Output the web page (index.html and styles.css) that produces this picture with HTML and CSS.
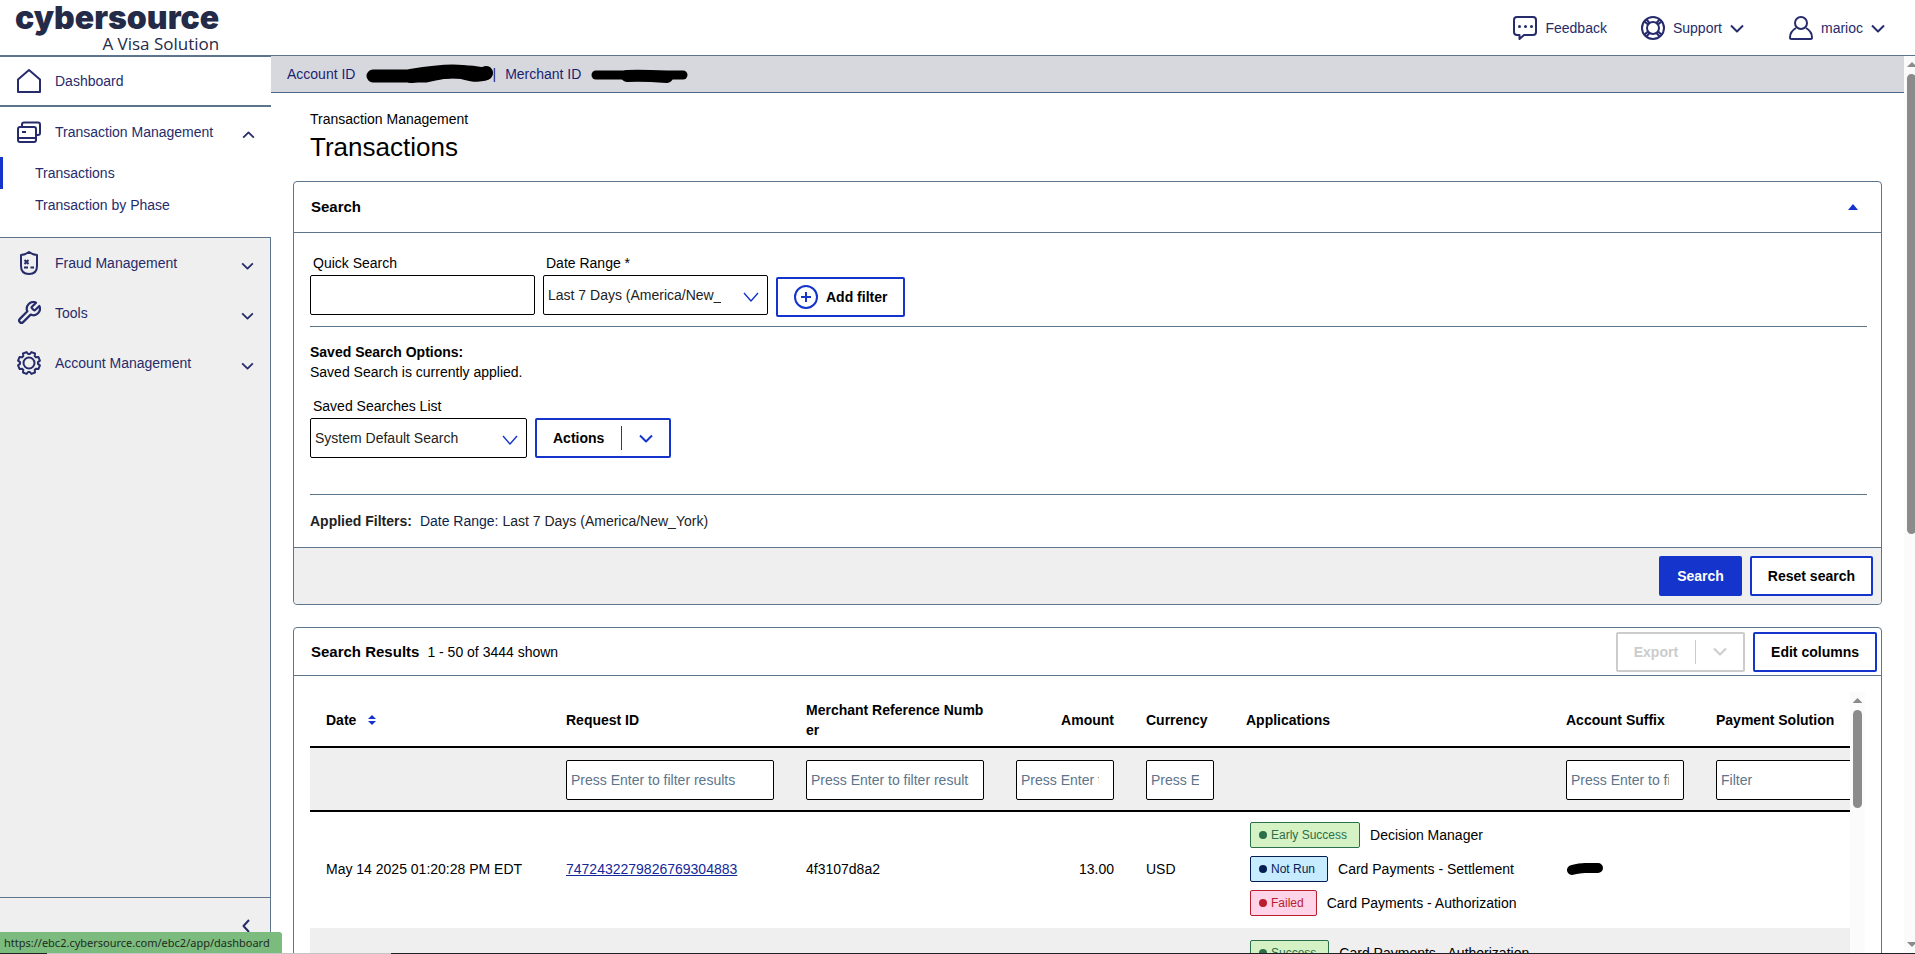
FILE: index.html
```html
<!DOCTYPE html>
<html lang="en">
<head>
<meta charset="utf-8">
<title>Transactions</title>
<link rel="stylesheet" href="styles.css">
</head>
<body>
<svg class="defs" aria-hidden="true">
  <symbol id="chev-down" viewBox="0 0 14 9"><path d="M1 1.5 7 7.5 13 1.5"/></symbol>
  <symbol id="chev-up" viewBox="0 0 14 9"><path d="M1 7.5 7 1.5 13 7.5"/></symbol>
</svg>

<header class="topbar">
  <a class="logo" href="#"><span class="logo-name">cybersource</span><span class="logo-tag">A Visa Solution</span></a>
  <nav class="top-links">
    <a class="top-link" href="#">
      <svg class="icon" viewBox="0 0 24 24"><path d="M4 1H20a3 3 0 0 1 3 3V16a3 3 0 0 1-3 3H11L6.500 23V19H4a3 3 0 0 1-3-3V4a3 3 0 0 1 3-3z"/><g class="fill"><circle cx="6.500" cy="10.500" r="1.500"/><circle cx="12.500" cy="10.500" r="1.500"/><circle cx="18.500" cy="10.500" r="1.500"/></g></svg>
      Feedback
    </a>
    <button class="top-link" type="button">
      <svg class="icon" viewBox="0 0 24 24"><circle cx="12" cy="12" r="11"/><circle cx="12" cy="12" r="6"/><path d="M3.500 5.500 7 8.500M5.500 3.500 8.500 7M20.500 5.500 17 8.500M18.500 3.500 15.500 7M3.500 18.500 7 15.500M5.500 20.500 8.500 17M20.500 18.500 17 15.500M18.500 20.500 15.500 17"/></svg>
      Support
      <svg class="chev"><use href="#chev-down"/></svg>
    </button>
    <button class="top-link user" type="button">
      <svg class="icon" viewBox="0 0 24 24"><circle cx="12" cy="7" r="6"/><path d="M7 12C3.500 14 1 17.500 1 21.500Q1 23 2.500 23H21.500Q23 23 23 21.500C23 17.500 20.500 14 17 12"/></svg>
      marioc
      <svg class="chev"><use href="#chev-down"/></svg>
    </button>
  </nav>
</header>

<div class="shell">
  <aside class="sidebar">
    <nav class="side-active">
      <a class="side-row dashboard" href="#">
        <svg class="icon" viewBox="0 0 24 24"><path d="M1 10.500 12 1 23 10.500V23H1z"/></svg>
        <span>Dashboard</span>
      </a>
      <button class="side-row" type="button">
        <svg class="icon" viewBox="0 0 24 24"><rect x="1" y="7" width="18" height="15" rx="2"/><path d="M5 7V4.500A2 2 0 0 1 7 2.500H21A2 2 0 0 1 23 4.500V13A2 2 0 0 1 21 15H19M1 18H19M5 12H9"/></svg>
        <span>Transaction Management</span>
        <svg class="chev-s"><use href="#chev-up"/></svg>
      </button>
      <a class="side-sub current" href="#">Transactions</a>
      <a class="side-sub" href="#">Transaction by Phase</a>
    </nav>
    <nav class="side-rest">
      <button class="side-row" type="button">
        <svg class="icon" viewBox="0 0 24 24"><path d="M12 1Q8 4 4 4V15C4 20 7 23 12 23S20 20 20 15V4Q16 4 12 1z"/><path d="M7.500 9 11.500 13M11.500 9 7.500 13M7 16.500H11M13.500 16.500H17"/></svg>
        <span>Fraud Management</span>
        <svg class="chev-s"><use href="#chev-down"/></svg>
      </button>
      <button class="side-row" type="button">
        <svg class="icon" viewBox="1 1 22 22"><path d="M14.700 6.300a1 1 0 0 0 0 1.400l1.600 1.600a1 1 0 0 0 1.400 0l3.770-3.770a6 6 0 0 1-7.940 7.940l-6.910 6.910a2.120 2.120 0 0 1-3-3l6.910-6.910a6 6 0 0 1 7.940-7.940l-3.760 3.760z"/></svg>
        <span>Tools</span>
        <svg class="chev-s"><use href="#chev-down"/></svg>
      </button>
      <button class="side-row" type="button">
        <svg class="icon" viewBox="-12 -12 24 24"><circle r="5.500"/><path d="M.9-9 2.400-10.900 6-9.500 5.700-6.900 6.900-5.700 9.500-6 10.900-2.400 9-.9V.9L10.900 2.400 9.500 6 6.900 5.700 5.700 6.900 6 9.500 2.400 10.900.9 9H-.9L-2.400 10.900-6 9.500-5.700 6.900-6.900 5.700-9.500 6-10.900 2.400-9 .9V-.9L-10.900-2.400-9.500-6-6.900-5.700-5.700-6.900-6-9.500-2.400-10.900-.9-9z"/></svg>
        <span>Account Management</span>
        <svg class="chev-s"><use href="#chev-down"/></svg>
      </button>
      <div class="side-foot">
        <button class="collapse" type="button" aria-label="Collapse menu"><svg viewBox="0 0 8 14"><path d="M7 1 1.500 7 7 13"/></svg></button>
      </div>
    </nav>
  </aside>

  <main class="main">
    <div class="account-bar">
      <span>Account ID</span>
      <svg class="redact-a" viewBox="0 0 128 20"><path d="M7 12H60Q90 4 119 10" stroke-width="13"/><path d="M45 12Q80 6 96 8Q112 13 120 9" stroke-width="14"/></svg>
      <span class="bar-sep">|</span>
      <span>Merchant ID</span>
      <svg class="redact-b" viewBox="0 0 98 16"><path d="M5 7H92" stroke-width="9"/><path d="M36 8Q50 7 76 9" stroke-width="12"/></svg>
    </div>

    <div class="page">
      <p class="crumb">Transaction Management</p>
      <h1>Transactions</h1>

      <section class="panel">
        <div class="panel-head search-head">
          <h2>Search</h2>
          <button class="toggle" type="button" aria-label="Collapse search"><svg viewBox="0 0 10 6"><path d="M0 6 5 0 10 6z"/></svg></button>
        </div>
        <div class="panel-body">
          <div class="fields">
            <div class="field">
              <label for="quick">Quick Search</label>
              <input class="box" id="quick" type="text">
            </div>
            <div class="field">
              <label for="range">Date Range *</label>
              <div class="pick">
                <select class="box" id="range"><option>Last 7 Days (America/New_York)</option></select>
                <svg class="pick-chev" viewBox="0 0 16 10"><path d="M1 1 8 9 15 1"/></svg>
              </div>
            </div>
            <button class="btn" type="button">
              <svg class="plus" viewBox="0 0 24 24"><circle cx="12" cy="12" r="11"/><path d="M12 7V17M7 12H17"/></svg>
              Add filter
            </button>
          </div>
          <hr>
          <div class="saved">
            <p class="strong">Saved Search Options:</p>
            <p>Saved Search is currently applied.</p>
          </div>
          <div class="saved-row">
            <div class="field saved-field">
              <label for="saved">Saved Searches List</label>
              <div class="pick">
                <select class="box" id="saved"><option>System Default Search</option></select>
                <svg class="pick-chev" viewBox="0 0 16 10"><path d="M1 1 8 9 15 1"/></svg>
              </div>
            </div>
            <button class="btn split" type="button">Actions<i></i><svg class="chev"><use href="#chev-down"/></svg></button>
          </div>
          <hr>
          <p class="applied"><b>Applied Filters:</b><span class="applied-key">Date Range: <span class="applied-val">Last 7 Days (America/New_York)</span></span></p>
        </div>
        <div class="panel-foot">
          <button class="btn primary" type="button">Search</button>
          <button class="btn" type="button">Reset search</button>
        </div>
      </section>

      <section class="panel">
        <div class="panel-head results-head">
          <h2>Search Results</h2>
          <span class="count">1 - 50 of 3444 shown</span>
          <button class="btn split" type="button" disabled>Export<i></i><svg class="chev"><use href="#chev-down"/></svg></button>
          <button class="btn" type="button">Edit columns</button>
        </div>
        <div class="results">
          <div class="table-clip">
            <table>
              <colgroup><col class="c240"><col class="c240"><col class="c210"><col class="c130"><col class="c100"><col class="c320"><col class="c150"><col class="c200"></colgroup>
              <thead>
                <tr>
                  <th>Date <svg class="sort" viewBox="0 0 8 10"><path d="M0 4 4 0 8 4zM0 6 4 10 8 6z"/></svg></th>
                  <th>Request ID</th>
                  <th>Merchant Reference Number</th>
                  <th class="num">Amount</th>
                  <th>Currency</th>
                  <th>Applications</th>
                  <th>Account Suffix</th>
                  <th>Payment Solution</th>
                </tr>
                <tr class="filters">
                  <td></td>
                  <td><input class="box" type="text" aria-label="Filter Request ID" placeholder="Press Enter to filter results"></td>
                  <td><input class="box" type="text" aria-label="Filter Merchant Reference Number" placeholder="Press Enter to filter results"></td>
                  <td><input class="box" type="text" aria-label="Filter Amount" placeholder="Press Enter to filter results"></td>
                  <td><input class="box" type="text" aria-label="Filter Currency" placeholder="Press Enter to filter results"></td>
                  <td></td>
                  <td><input class="box" type="text" aria-label="Filter Account Suffix" placeholder="Press Enter to filter results"></td>
                  <td><input class="box" type="text" aria-label="Filter Payment Solution" placeholder="Filter"></td>
                </tr>
              </thead>
              <tbody>
                <tr>
                  <td>May 14 2025 01:20:28 PM EDT</td>
                  <td><a class="link" href="#">7472432279826769304883</a></td>
                  <td>4f3107d8a2</td>
                  <td class="num">13.00</td>
                  <td>USD</td>
                  <td class="apps">
                    <ul>
                      <li><span class="tag ok">Early Success</span>Decision Manager</li>
                      <li><span class="tag info">Not Run</span>Card Payments - Settlement</li>
                      <li><span class="tag bad">Failed</span>Card Payments - Authorization</li>
                    </ul>
                  </td>
                  <td><svg class="redact-c" viewBox="0 0 38 14"><path d="M6 8Q14 6 19 6Q26 6 32 6" stroke-width="10"/></svg></td>
                  <td></td>
                </tr>
                <tr>
                  <td></td><td></td><td></td><td></td><td></td>
                  <td class="apps">
                    <ul>
                      <li><span class="tag ok">Success</span>Card Payments - Authorization</li>
                    </ul>
                  </td>
                  <td></td><td></td>
                </tr>
              </tbody>
            </table>
          </div>
          <div class="scroll"><span class="arrow up"></span><span class="thumb short"></span></div>
        </div>
      </section>
    </div>
  </main>
  <div class="scroll page-scroll"><span class="arrow up"></span><span class="thumb"></span><span class="arrow down"></span></div>
</div>

<div class="status">https://ebc2.cybersource.com/ebc2/app/dashboard</div>
<div class="edge"></div>
</body>
</html>
```
FILE: styles.css
```css
* { box-sizing: border-box; }

:root {
  --navy: #262b6b;
  --blue: #1434cb;
  --line: #5c748c;
  --grey: #efefef;
}

body {
  margin: 0;
  height: 100vh;
  display: flex;
  flex-direction: column;
  overflow: hidden;
  background: #fff;
  color: #000;
  font: 14px/20px "Liberation Sans", Arial, sans-serif;
}

button, input, select { font: inherit; color: inherit; margin: 0; }
button { background: none; border: 0; padding: 0; }
a { color: inherit; text-decoration: none; }
p, h1, h2, ul { margin: 0; padding: 0; }
svg { display: block; flex: none; fill: none; stroke: currentColor; stroke-width: 2; stroke-linejoin: round; }
.defs { position: absolute; width: 0; height: 0; }
.icon { width: 24px; height: 24px; }
.icon .fill { fill: currentColor; stroke: none; }
.chev { width: 14px; height: 9px; }
.chev-s { width: 13px; height: 8px; }

/* Top bar */
.topbar {
  display: flex;
  justify-content: space-between;
  height: 56px;
  flex: none;
  border-bottom: 1px solid var(--line);
  color: var(--navy);
}
.logo { display: flex; flex-direction: column; align-items: flex-end; padding-left: 15px; color: #232b48; }
.logo-name { font: 900 32px/36px Inter, sans-serif; }
.logo-tag { font: 17px/16px "Open Sans", sans-serif; }
.top-links { display: flex; gap: 34px; padding: 16px 30px 15px 0; }
.top-link { display: flex; align-items: center; gap: 8px; height: 24px; }
.top-link.user { margin-left: 11px; }

/* Shell */
.shell { flex: 1; min-height: 0; display: flex; }
.sidebar { width: 271px; flex: none; display: flex; flex-direction: column; color: var(--navy); }
.side-active { padding-bottom: 16px; }
.side-row {
  display: flex;
  align-items: center;
  gap: 14px;
  width: 100%;
  height: 50px;
  padding: 0 16px 0 17px;
  text-align: left;
}
.side-row span { flex: 1; }
.side-row .chev-s { margin-top: 6px; }
.dashboard { height: 51px; border-top: 1px solid var(--line); border-bottom: 2px solid var(--line); }
.side-sub { display: block; padding: 6px 0 6px 35px; }
.side-sub.current { border-left: 3px solid var(--blue); padding-left: 32px; }
.side-rest {
  flex: 1;
  display: flex;
  flex-direction: column;
  background: var(--grey);
  border-top: 1px solid var(--line);
  border-right: 1px solid var(--line);
}
.side-foot { height: 57px; margin-top: auto; border-top: 1px solid var(--line); display: flex; justify-content: flex-end; padding: 21px 20px 0 0; }
.collapse { height: 14px; }
.collapse svg { width: 8px; height: 14px; }

/* Main column */
.main { flex: 1; min-width: 0; display: flex; flex-direction: column; overflow: hidden; }
.account-bar {
  display: flex;
  align-items: center;
  flex: none;
  height: 37px;
  padding-left: 16px;
  background: #d7d8dd;
  border-bottom: 1px solid #4a668c;
  color: #1a1f71;
}
.account-bar svg, .redact-c { stroke: #000; stroke-linecap: round; }
.redact-a { width: 128px; height: 20px; margin-left: 11px; }
.redact-b { width: 98px; height: 16px; margin: 4px 0 0 10px; }
.redact-c { width: 38px; height: 14px; }
.bar-sep { margin: 0 9px 0 -2px; }
.page { padding: 16px 22px 0; }
.crumb { padding-left: 17px; }
h1 { font-size: 26px; line-height: 32px; font-weight: 400; padding: 2px 0 18px 17px; }
h2 { font-size: 15px; line-height: 20px; }

.panel { border: 1px solid var(--line); border-radius: 4px; margin-bottom: 22px; }
.panel-head { display: flex; align-items: center; border-bottom: 1px solid var(--line); padding-left: 17px; }
.search-head { height: 51px; justify-content: space-between; padding-right: 23px; }
.toggle svg { width: 10px; height: 6px; fill: var(--blue); stroke: none; }
.panel-body { padding: 20px 14px 16px 16px; }
.fields { display: flex; align-items: flex-end; gap: 8px; }
.fields .field { width: 225px; padding-bottom: 2px; }
.field label { display: block; padding: 0 0 2px 3px; }
.box {
  display: block;
  width: 100%;
  height: 40px;
  padding: 0 14px 0 4px;
  background: #fff;
  border: 1px solid #000;
  border-radius: 2px;
}
.box::placeholder { color: #5c748c; opacity: 1; }
.pick { position: relative; }
.pick select { appearance: none; color: #222; padding-right: 46px; }
.pick-chev { position: absolute; right: 9px; top: 17px; width: 16px; height: 10px; stroke: var(--blue); stroke-width: 1.4; pointer-events: none; }
hr { height: 0; border: 0; border-top: 1px solid var(--line); margin: 9px 0 0; }
.strong { font-weight: 700; }
.saved { padding-top: 15px; }
.saved-row { display: flex; align-items: flex-end; gap: 8px; padding: 14px 0 27px; }
.saved-field { width: 217px; }
.applied { padding-top: 16px; color: #222; }
.applied-key { margin-left: 8px; color: #0b1f50; }
.applied-val { color: #222; }
.panel-foot { display: flex; justify-content: flex-end; gap: 8px; padding: 8px; background: var(--grey); border-top: 1px solid var(--line); border-radius: 0 0 4px 4px; }

.btn {
  display: flex;
  align-items: center;
  gap: 8px;
  height: 40px;
  padding: 0 16px;
  background: #fff;
  border: 2px solid var(--blue);
  border-radius: 2px;
  font-weight: 700;
  white-space: nowrap;
}
.btn svg { stroke: var(--blue); }
.plus { width: 24px; height: 24px; }
.primary { background: var(--blue); color: #fff; }
.split { gap: 17px; }
.split i { width: 1px; height: 24px; background: var(--blue); }
.btn:disabled { color: #ccc; border-color: #ccc; }
.btn:disabled svg { stroke: #ccc; }
.btn:disabled i { background: #ccc; }

/* Results */
.results-head { height: 48px; gap: 8px; padding-right: 4px; }
.count { flex: 1; }
.results { display: flex; padding: 16px; min-height: 320px; }
.table-clip { flex: 1; min-width: 0; overflow: hidden; }
table { table-layout: fixed; width: 1590px; border-collapse: separate; border-spacing: 0; }
.c100 { width: 100px; }
.c130 { width: 130px; }
.c150 { width: 150px; }
.c200 { width: 200px; }
.c210 { width: 210px; }
.c240 { width: 240px; }
.c320 { width: 320px; }
th, td { padding: 0 16px 2px; text-align: left; vertical-align: middle; }
th { height: 56px; padding: 2px 16px 0; border-bottom: 2px solid #000; word-break: break-all; }
.num { text-align: right; }
.sort { display: inline-block; width: 8px; height: 10px; margin-left: 8px; fill: var(--blue); stroke: none; }
.filters td { height: 64px; padding: 2px 16px 0; background: var(--grey); border-bottom: 2px solid #000; }
.link { color: #14279b; text-decoration: underline; }
tbody tr:nth-child(even) td { background: var(--grey); }
td.apps { padding: 12px 0 12px 20px; }
tbody tr:first-child td.apps { padding-top: 10px; }
ul { list-style: none; display: flex; flex-direction: column; gap: 8px; }
li { display: flex; align-items: center; gap: 10px; white-space: nowrap; }
.tag {
  display: flex;
  align-items: center;
  gap: 4px;
  height: 26px;
  padding: 0 12px 0 8px;
  border: 1px solid;
  border-radius: 2px;
  font-size: 12px;
}
.tag::before { content: ""; width: 8px; height: 8px; border-radius: 50%; background: currentColor; }
.ok { color: #2b6e4a; background: #d5f2c4; }
.info { color: #041e54; background: #c8ecff; }
.bad { color: #b81e2d; background: #ffd3e8; }

/* Scroll tracks */
.scroll { width: 15px; flex: none; display: flex; flex-direction: column; align-items: center; background: #fbfbfb; padding-top: 6px; }
.arrow { width: 10px; height: 5px; background: #8b8b8b; }
.up { clip-path: polygon(50% 0, 100% 100%, 0 100%); }
.down { clip-path: polygon(0 0, 100% 0, 50% 100%); margin-top: auto; }
.thumb { width: 9px; height: 52%; margin-top: 7px; border-radius: 5px; background: #8b8b8b; }
.thumb.short { height: 98px; }
.page-scroll { width: 11px; align-items: flex-start; padding: 6px 0 7px 3px; overflow: hidden; }
.page-scroll span { flex: none; }

/* Link preview and window edge */
.status {
  position: fixed;
  left: 0;
  bottom: 1px;
  padding: 2px 12px 1px 4px;
  background: #7bbb7e;
  border-radius: 0 3px 0 0;
  color: #1d2b20;
  font: 11px/18px "Noto Sans", sans-serif;
}
.edge {
  position: fixed;
  inset: auto 0 0 0;
  height: 1px;
  background: linear-gradient(90deg, #202124 47px, #c4c4c4 47px 391px, #202124 391px);
}
```
